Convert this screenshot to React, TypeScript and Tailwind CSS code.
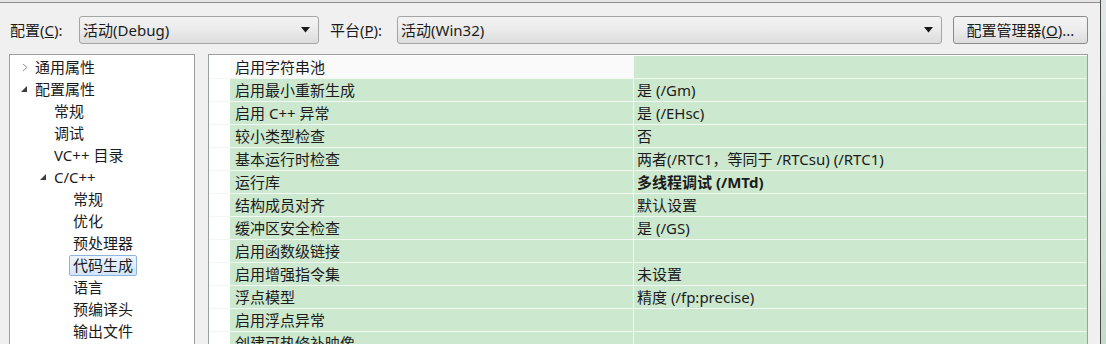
import { ReactNode } from "react";

/* tree on the left: label, indent level, expander kind */
interface TreeItem {
  label: string;
  level: number;
  expander?: "closed" | "open";
  selected?: boolean;
}

const treeItems: TreeItem[] = [
  { label: "通用属性", level: 0, expander: "closed" },
  { label: "配置属性", level: 0, expander: "open" },
  { label: "常规", level: 1 },
  { label: "调试", level: 1 },
  { label: "VC++ 目录", level: 1 },
  { label: "C/C++", level: 1, expander: "open" },
  { label: "常规", level: 2 },
  { label: "优化", level: 2 },
  { label: "预处理器", level: 2 },
  { label: "代码生成", level: 2, selected: true },
  { label: "语言", level: 2 },
  { label: "预编译头", level: 2 },
  { label: "输出文件", level: 2 },
];

/* property grid rows */
const rows: { name: string; value: string; bold?: boolean; plain?: boolean }[] = [
  { name: "启用字符串池", value: "", plain: true },
  { name: "启用最小重新生成", value: "是 (/Gm)" },
  { name: "启用 C++ 异常", value: "是 (/EHsc)" },
  { name: "较小类型检查", value: "否" },
  { name: "基本运行时检查", value: "两者(/RTC1，等同于 /RTCsu) (/RTC1)" },
  { name: "运行库", value: "多线程调试 (/MTd)", bold: true },
  { name: "结构成员对齐", value: "默认设置" },
  { name: "缓冲区安全检查", value: "是 (/GS)" },
  { name: "启用函数级链接", value: "" },
  { name: "启用增强指令集", value: "未设置" },
  { name: "浮点模型", value: "精度 (/fp:precise)" },
  { name: "启用浮点异常", value: "" },
  { name: "创建可热修补映像", value: "" },
];

const indentClass = ["pl-[25px]", "pl-[44px]", "pl-[63px]"];
const arrowLeft = ["left-[11px]", "left-[30px]", "left-[49px]"];

const Combo = ({ text, width }: { text: ReactNode; width: string }) => (
  <div
    className={`${width} h-[28px] flex items-center justify-between rounded-[3px] border border-[#a5a5a5] bg-gradient-to-b from-[#f3f3f3] via-[#ebebeb] to-[#dcdcdc] pl-[3px] pr-[8px]`}
  >
    <span>{text}</span>
    <svg width="9" height="6" viewBox="0 0 9 6">
      <path d="M0 0 L9 0 L4.5 5.5 Z" fill="#1a1a1a" />
    </svg>
  </div>
);

const App = () => {
  return (
    <div
      className="flex w-[1106px] h-[344px] overflow-hidden text-[15px] text-[#1b1b1b]"
      style={{ fontFamily: '"Noto Sans", "Noto Sans CJK SC", sans-serif' }}
    >
      <div className="w-[1100px] bg-[#f0f0f0] flex flex-col">
        <div className="h-[3px] bg-[#e4e4e4] border-b border-[#8e8e8e]" />

        {/* toolbar */}
        <div className="mt-[13px] h-[28px] flex items-center pl-[10px]">
          <div className="w-[69px]">
            配置(<span className="underline">C</span>):
          </div>
          <Combo text="活动(Debug)" width="w-[240px]" />
          <div className="ml-[11px] w-[67px]">
            平台(<span className="underline">P</span>):
          </div>
          <Combo text="活动(Win32)" width="w-[545px]" />
          <button className="ml-[11px] w-[135px] h-[28px] rounded-[3px] border border-[#8a8a8a] bg-gradient-to-b from-[#f4f4f4] via-[#ececec] to-[#dcdcdc]">
            配置管理器(<span className="underline">O</span>)...
          </button>
        </div>

        {/* panels */}
        <div className="mt-[10px] flex flex-1 min-h-0 pl-[9px]">
          {/* tree */}
          <div className="w-[186px] border border-b-0 border-[#9a9ea6] bg-white pt-[1px]">
            {treeItems.map((item, i) => (
              <div key={i} className={`relative h-[22px] flex items-center ${indentClass[item.level]}`}>
                {item.expander === "closed" && (
                  <svg className={`absolute ${arrowLeft[item.level]} top-[7px]`} width="8" height="9" viewBox="0 0 8 9">
                    <path d="M2 1 L6 4.5 L2 8" fill="none" stroke="#8c8c8c" strokeWidth="1" />
                  </svg>
                )}
                {item.expander === "open" && (
                  <svg className={`absolute ${arrowLeft[item.level]} top-[8px]`} width="6" height="6" viewBox="0 0 6 6">
                    <path d="M6 0 L6 6 L0 6 Z" fill="#3c3c3c" />
                  </svg>
                )}
                {item.selected ? (
                  <span className="-ml-[4px] px-[3px] h-[21px] flex items-center rounded-[2px] border border-[#8fb3df] bg-gradient-to-b from-[#eef5fd] to-[#d2e5f9]">
                    {item.label}
                  </span>
                ) : (
                  <span>{item.label}</span>
                )}
              </div>
            ))}
          </div>

          {/* property grid */}
          <div className="ml-[13px] w-[880px] border border-b-0 border-[#9a9ea6] bg-white pt-[1px]">
            {rows.map((r, i) => (
              <div key={i} className="flex h-[23px] border-b border-[#f2f9f3]">
                <div className="w-[21px] bg-white" />
                <div
                  className={`w-[403px] flex items-center pl-[5px] ${r.plain ? "bg-[#fafafa]" : "bg-[#cce8cf]"}`}
                >
                  {r.name}
                </div>
                <div className="w-px bg-[#f2f9f3]" />
                <div className={`flex-1 flex items-center pl-[3px] bg-[#cce8cf] ${r.bold ? "font-bold" : ""}`}>
                  {r.value}
                </div>
              </div>
            ))}
          </div>
        </div>
      </div>
      <div className="w-px bg-[#4a4a4a]" />
      <div className="flex-1 bg-gradient-to-b from-[#e2e6e8] to-[#c6dccb]" />
    </div>
  );
};

export default App;
